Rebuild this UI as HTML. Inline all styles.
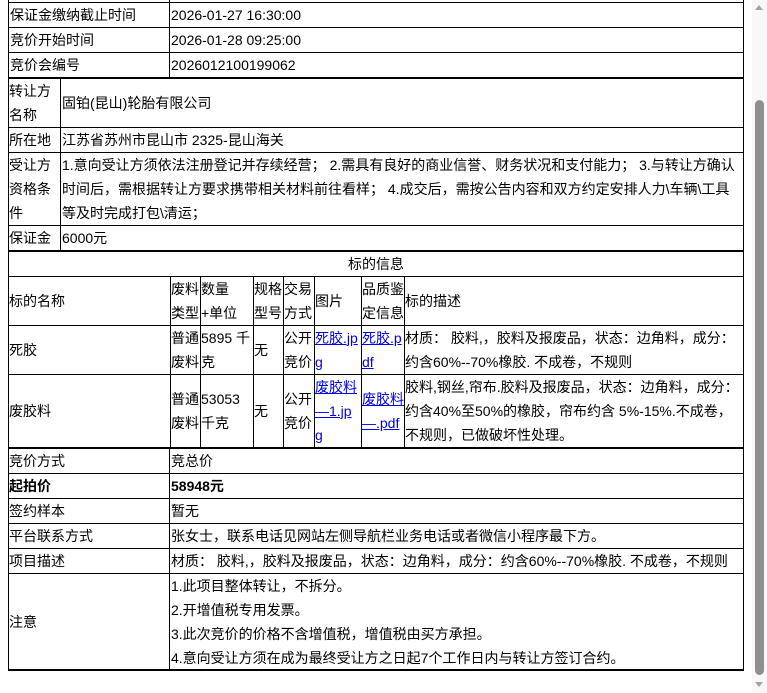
<!DOCTYPE html>
<html><head><meta charset="utf-8"><style>
html,body{margin:0;padding:0;width:767px;height:693px;overflow:hidden;background:#fff;}
body{position:relative;font-family:"Liberation Sans","Noto Sans CJK SC",sans-serif;font-size:14px;color:#000;}
.h{position:absolute;left:8px;width:736px;height:1px;background:#000;}
.v{position:absolute;width:1px;background:#000;}
.c{position:absolute;display:flex;align-items:center;line-height:24px;white-space:nowrap;}
.w{white-space:normal;word-break:break-all;}
a{color:#0000ee;text-decoration:underline;}
</style></head><body>
<div class="h" style="top:2px"></div>
<div class="h" style="top:27px"></div>
<div class="h" style="top:52px"></div>
<div class="h" style="top:77px;height:2px"></div>
<div class="h" style="top:127px"></div>
<div class="h" style="top:152px"></div>
<div class="h" style="top:225px"></div>
<div class="h" style="top:250px;height:2px"></div>
<div class="h" style="top:276px"></div>
<div class="h" style="top:325px"></div>
<div class="h" style="top:374px"></div>
<div class="h" style="top:447px;height:2px"></div>
<div class="h" style="top:473px"></div>
<div class="h" style="top:498px"></div>
<div class="h" style="top:523px"></div>
<div class="h" style="top:548px"></div>
<div class="h" style="top:573px"></div>
<div class="h" style="top:669px;height:2px"></div>
<div class="v" style="left:8px;top:0;height:671px"></div>
<div class="v" style="left:743px;top:0;height:671px"></div>
<div class="v" style="left:169px;top:0;height:77px"></div>
<div class="v" style="left:60px;top:77px;height:173px"></div>
<div class="v" style="left:170px;top:276px;height:171px"></div>
<div class="v" style="left:200px;top:276px;height:171px"></div>
<div class="v" style="left:253px;top:276px;height:171px"></div>
<div class="v" style="left:283px;top:276px;height:171px"></div>
<div class="v" style="left:314px;top:276px;height:171px"></div>
<div class="v" style="left:361px;top:276px;height:171px"></div>
<div class="v" style="left:404px;top:276px;height:171px"></div>
<div class="v" style="left:169px;top:447px;height:223px"></div>

<div class="c" style="left:10px;top:2px;height:25px">保证金缴纳截止时间</div>
<div class="c" style="left:171px;top:2px;height:25px">2026-01-27 16:30:00</div>
<div class="c" style="left:10px;top:27px;height:25px">竞价开始时间</div>
<div class="c" style="left:171px;top:27px;height:25px">2026-01-28 09:25:00</div>
<div class="c" style="left:10px;top:52px;height:25px">竞价会编号</div>
<div class="c" style="left:171px;top:52px;height:25px">2026012100199062</div>

<div class="c w" style="left:9px;top:79px;height:48px;width:50px">转让方名称</div>
<div class="c" style="left:62px;top:79px;height:48px">固铂(昆山)轮胎有限公司</div>
<div class="c" style="left:9px;top:127px;height:25px">所在地</div>
<div class="c" style="left:62px;top:127px;height:25px">江苏省苏州市昆山市 2325-昆山海关</div>
<div class="c w" style="left:9px;top:153px;height:72px;width:50px">受让方资格条件</div>
<div class="c w" style="left:62px;top:153px;height:72px;width:680px">1.意向受让方须依法注册登记并存续经营； 2.需具有良好的商业信誉、财务状况和支付能力； 3.与转让方确认时间后，需根据转让方要求携带相关材料前往看样； 4.成交后，需按公告内容和双方约定安排人力\车辆\工具等及时完成打包\清运；</div>
<div class="c" style="left:9px;top:225px;height:25px">保证金</div>
<div class="c" style="left:62px;top:225px;height:25px">6000元</div>

<div class="c" style="left:8px;top:252px;height:24px;width:736px;justify-content:center">标的信息</div>
<div class="c" style="left:9px;top:276px;height:49px">标的名称</div>
<div class="c w" style="left:171px;top:276px;height:49px;width:29px">废料类型</div>
<div class="c w" style="left:201px;top:276px;height:49px;width:40px">数量+单位</div>
<div class="c w" style="left:254px;top:276px;height:49px;width:29px">规格型号</div>
<div class="c w" style="left:284px;top:276px;height:49px;width:29px">交易方式</div>
<div class="c" style="left:315px;top:276px;height:49px">图片</div>
<div class="c w" style="left:362px;top:276px;height:49px;width:42px">品质鉴定信息</div>
<div class="c" style="left:405px;top:276px;height:49px">标的描述</div>

<div class="c" style="left:9px;top:325px;height:49px">死胶</div>
<div class="c w" style="left:171px;top:325px;height:49px;width:29px">普通废料</div>
<div class="c w" style="left:201px;top:325px;height:49px;width:52px">5895 千克</div>
<div class="c" style="left:254px;top:325px;height:49px">无</div>
<div class="c w" style="left:284px;top:325px;height:49px;width:29px">公开竞价</div>
<div class="c w" style="left:315px;top:325px;height:49px;width:46px"><a>死胶.jpg</a></div>
<div class="c w" style="left:362px;top:325px;height:49px;width:42px"><a>死胶.pdf</a></div>
<div class="c w" style="left:405px;top:325px;height:49px;width:337px">材质： 胶料,，胶料及报废品，状态：边角料，成分：约含60%--70%橡胶. 不成卷，不规则</div>

<div class="c" style="left:9px;top:374px;height:73px">废胶料</div>
<div class="c w" style="left:171px;top:374px;height:73px;width:29px">普通废料</div>
<div class="c w" style="left:201px;top:374px;height:73px;width:45px">53053 千克</div>
<div class="c" style="left:254px;top:374px;height:73px">无</div>
<div class="c w" style="left:284px;top:374px;height:73px;width:29px">公开竞价</div>
<div class="c w" style="left:315px;top:374px;height:73px;width:43px"><a>废胶料—1.jpg</a></div>
<div class="c w" style="left:362px;top:374px;height:73px;width:42px"><a>废胶料—.pdf</a></div>
<div class="c w" style="left:405px;top:374px;height:73px;width:337px">胶料,钢丝,帘布.胶料及报废品，状态：边角料，成分：约含40%至50%的橡胶，帘布约含 5%-15%.不成卷，不规则，已做破坏性处理。</div>

<div class="c" style="left:9px;top:449px;height:24px">竞价方式</div>
<div class="c" style="left:171px;top:449px;height:24px">竞总价</div>
<div class="c" style="left:9px;top:473px;height:25px;font-weight:bold">起拍价</div>
<div class="c" style="left:171px;top:473px;height:25px;font-weight:bold">58948元</div>
<div class="c" style="left:9px;top:498px;height:25px">签约样本</div>
<div class="c" style="left:171px;top:498px;height:25px">暂无</div>
<div class="c" style="left:9px;top:523px;height:25px">平台联系方式</div>
<div class="c" style="left:171px;top:523px;height:25px">张女士，联系电话见网站左侧导航栏业务电话或者微信小程序最下方。</div>
<div class="c" style="left:9px;top:548px;height:25px">项目描述</div>
<div class="c" style="left:171px;top:548px;height:25px">材质： 胶料,，胶料及报废品，状态：边角料，成分：约含60%--70%橡胶. 不成卷，不规则</div>
<div class="c" style="left:9px;top:574px;height:96px">注意</div>
<div style="position:absolute;left:171px;top:574px;line-height:24px">1.此项目整体转让，不拆分。<br>2.开增值税专用发票。<br>3.此次竞价的价格不含增值税，增值税由买方承担。<br>4.意向受让方须在成为最终受让方之日起7个工作日内与转让方签订合约。</div>

<div style="position:absolute;left:752px;top:0;width:15px;height:693px;background:#f8f8f8"></div>
<div style="position:absolute;left:755px;top:5px;width:0;height:0;border-left:4.5px solid transparent;border-right:4.5px solid transparent;border-bottom:5px solid #a3a3a3"></div>
<div style="position:absolute;left:755px;top:100px;width:9px;height:575px;background:#8f8f8f;border-radius:5px"></div>
<div style="position:absolute;left:755px;top:682px;width:0;height:0;border-left:4.5px solid transparent;border-right:4.5px solid transparent;border-top:5px solid #a3a3a3"></div>
</body></html>
